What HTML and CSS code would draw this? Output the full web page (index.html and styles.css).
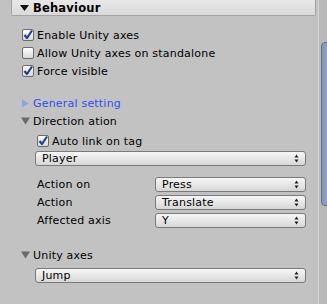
FILE: index.html
```html
<!DOCTYPE html>
<html>
<head>
<meta charset="utf-8">
<link rel="stylesheet" href="styles.css">
</head>
<body>
<div class="window">
  <div class="panel">
    <div class="header">
      <svg class="tri-h" width="9" height="8" viewBox="0 0 9 8"><path d="M0 1 L9 1 L4.5 7 Z" fill="#111"/></svg>
      <span class="header-title">Behaviour</span>
    </div>

    <div class="row r-enable l1">
      <span class="check on"><svg width="12" height="12" viewBox="0 0 12 12"><path d="M2.5 6 L5 9 L10 1.5" fill="none" stroke="#1f3f8f" stroke-width="2.2" stroke-linejoin="round"/></svg></span>
      <span class="label">Enable Unity axes</span>
    </div>
    <div class="row l1">
      <span class="check"></span>
      <span class="label">Allow Unity axes on standalone</span>
    </div>
    <div class="row l1">
      <span class="check on"><svg width="12" height="12" viewBox="0 0 12 12"><path d="M2.5 6 L5 9 L10 1.5" fill="none" stroke="#1f3f8f" stroke-width="2.2" stroke-linejoin="round"/></svg></span>
      <span class="label">Force visible</span>
    </div>

    <div class="row r-general fold">
      <svg class="tri" width="8" height="9" viewBox="0 0 8 9"><path d="M0 0.5 L7 4.5 L0 8.5 Z" fill="#8ea2e6"/></svg>
      <span class="label blue">General setting</span>
    </div>
    <div class="row fold">
      <svg class="tri" width="9" height="8" viewBox="0 0 9 8"><path d="M0 0.5 L9 0.5 L4.5 7.5 Z" fill="#6a6a6a"/></svg>
      <span class="label">Direction ation</span>
    </div>

    <div class="row r-auto l2">
      <span class="check on"><svg width="12" height="12" viewBox="0 0 12 12"><path d="M2.5 6 L5 9 L10 1.5" fill="none" stroke="#1f3f8f" stroke-width="2.2" stroke-linejoin="round"/></svg></span>
      <span class="label">Auto link on tag</span>
    </div>
    <div class="drop wide r-player"><span>Player</span><svg class="arr" width="5" height="9" viewBox="0 0 5 9"><path d="M2.5 0.5 L4.5 3.5 L0.5 3.5 Z M2.5 8.5 L4.5 5.5 L0.5 5.5 Z" fill="#222"/></svg></div>

    <div class="field r-actionon">
      <span class="flabel">Action on</span>
      <div class="drop"><span>Press</span><svg class="arr" width="5" height="9" viewBox="0 0 5 9"><path d="M2.5 0.5 L4.5 3.5 L0.5 3.5 Z M2.5 8.5 L4.5 5.5 L0.5 5.5 Z" fill="#222"/></svg></div>
    </div>
    <div class="field r-next">
      <span class="flabel">Action</span>
      <div class="drop"><span>Translate</span><svg class="arr" width="5" height="9" viewBox="0 0 5 9"><path d="M2.5 0.5 L4.5 3.5 L0.5 3.5 Z M2.5 8.5 L4.5 5.5 L0.5 5.5 Z" fill="#222"/></svg></div>
    </div>
    <div class="field r-next">
      <span class="flabel">Affected axis</span>
      <div class="drop"><span>Y</span><svg class="arr" width="5" height="9" viewBox="0 0 5 9"><path d="M2.5 0.5 L4.5 3.5 L0.5 3.5 Z M2.5 8.5 L4.5 5.5 L0.5 5.5 Z" fill="#222"/></svg></div>
    </div>

    <div class="row r-unity fold">
      <svg class="tri" width="9" height="8" viewBox="0 0 9 8"><path d="M0 0.5 L9 0.5 L4.5 7.5 Z" fill="#6a6a6a"/></svg>
      <span class="label">Unity axes</span>
    </div>
    <div class="drop wide r-jump"><span>Jump</span><svg class="arr" width="5" height="9" viewBox="0 0 5 9"><path d="M2.5 0.5 L4.5 3.5 L0.5 3.5 Z M2.5 8.5 L4.5 5.5 L0.5 5.5 Z" fill="#222"/></svg></div>
  </div>
  <div class="scroll">
    <div class="thumb"></div>
  </div>
</div>
</body>
</html>
```
FILE: styles.css
```css
* { box-sizing: border-box; }
html, body {
  margin: 0;
  padding: 0;
  background: #c2c2c2;
  width: 327px;
  height: 304px;
  overflow: hidden;
}
body {
  font-family: "DejaVu Sans", "Verdana", sans-serif;
  font-size: 11px;
  letter-spacing: 0.2px;
  color: #000;
}
.window {
  display: flex;
  width: 327px;
  height: 304px;
}
.panel {
  width: 318px;
  height: 304px;
  display: flex;
  flex-direction: column;
}
.header {
  margin-left: 11px;
  width: 305px;
  height: 16px;
  flex: none;
  display: flex;
  align-items: center;
  background: linear-gradient(#e8e8e8, #dadada);
  border: 1px solid #a4a4a4;
  border-top: none;
  border-radius: 0 0 2px 2px;
}
.tri-h { margin-left: 8px; margin-right: 4px; flex: none; }
.header-title {
  font-weight: bold;
  font-size: 11.5px;
  letter-spacing: 0.2px;
}
.row {
  height: 18px;
  flex: none;
  display: flex;
  align-items: center;
}
.r-enable { margin-top: 10px; }
.r-general { margin-top: 14px; }
.r-auto { margin-top: 2px; }
.r-unity { margin-top: 18px; }
.l1 { padding-left: 22px; }
.l2 { padding-left: 37px; }
.fold { padding-left: 21px; }
.tri { flex: none; margin-right: 3px; }
.r-general .tri { margin-left: 1px; margin-right: 3px; }
.check {
  width: 12px;
  height: 12px;
  flex: none;
  border: 1px solid #6b6b6b;
  border-radius: 2px;
  background: linear-gradient(#ffffff, #d8d8d8);
  margin-right: 3px;
  position: relative;
}
.check svg { position: absolute; left: -1px; top: -1px; }
.label { white-space: nowrap; }
.blue { color: #2f4ff0; }
.drop {
  height: 15px;
  flex: none;
  display: flex;
  align-items: center;
  justify-content: space-between;
  padding: 0 6px 0 6px;
  border: 1px solid #7a7a7a;
  border-radius: 3px;
  background: linear-gradient(#f6f6f6, #e4e4e4 60%, #d6d6d6);
  font-size: 11px;
}
.drop span { line-height: 13px; }
.wide { margin-left: 35px; width: 271px; }
.r-player { margin-top: 1px; }
.r-jump { margin-top: 4px; }
.arr { flex: none; }
.field {
  height: 15px;
  flex: none;
  display: flex;
  align-items: center;
  padding-left: 37px;
}
.r-actionon { margin-top: 11px; }
.r-next { margin-top: 3px; }
.flabel { width: 118px; flex: none; white-space: nowrap; }
.field .drop { width: 151px; }
.scroll {
  width: 9px;
  height: 304px;
  flex: none;
  background: #b9b9b9;
  border-left: 1px solid #d6d6d6;
  position: relative;
}
.thumb {
  position: absolute;
  left: 2px;
  top: 42px;
  width: 10px;
  height: 164px;
  background: linear-gradient(90deg, #8798b8, #95a3bf);
  border: 1px solid #5f6f8e;
  border-radius: 4px;
}
```
